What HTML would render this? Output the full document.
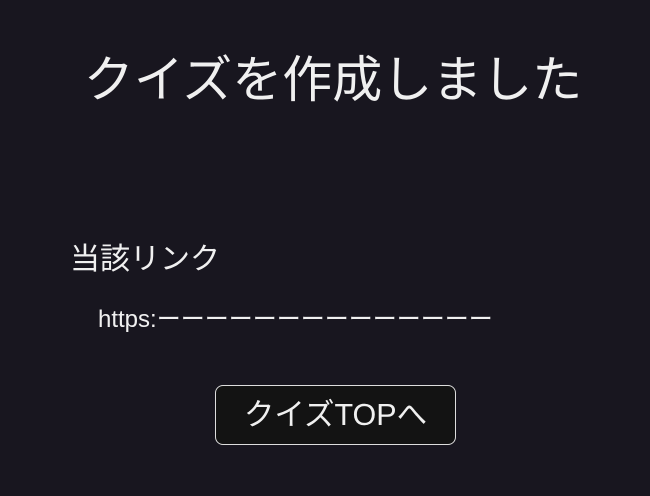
<!DOCTYPE html>
<html><head><meta charset="utf-8"><style>
html,body{margin:0;padding:0;width:650px;height:496px;background:#18161f;overflow:hidden;color:#f0f0f0;font-family:"Liberation Sans","Noto Sans CJK JP",sans-serif}
.t{position:absolute;left:8px;width:650px;top:48px;text-align:center;font-size:50px;line-height:64px;white-space:nowrap}
.h{position:absolute;left:70px;top:240px;font-size:30px;line-height:40px}
.u{position:absolute;left:98px;top:305px;font-size:24px;line-height:30px;white-space:nowrap}
.b{position:absolute;left:215px;top:385px;width:239px;height:58px;border:1px solid #ddd;border-radius:8px;background:#131313;box-sizing:content-box;text-align:center;font-size:30.5px;line-height:58px;white-space:nowrap}
</style></head><body>
<div class="t">クイズを作成しました</div>
<div class="h">当該リンク</div>
<div class="u">https:ーーーーーーーーーーーーーー</div>
<div class="b">クイズTOPへ</div>
</body></html>
